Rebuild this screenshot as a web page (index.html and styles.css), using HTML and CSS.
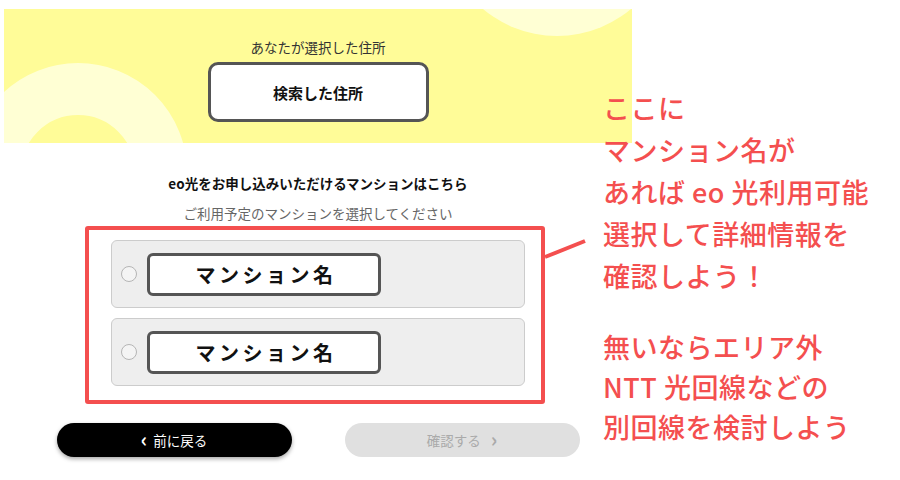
FILE: index.html
```html
<!DOCTYPE html>
<html lang="ja">
<head>
  <meta charset="UTF-8" />
  <meta name="viewport" content="width=device-width, initial-scale=1.0" />
  <title>マンション選択</title>
  <link rel="stylesheet" href="styles.css">
</head>
<body>
  <div class="page">
    <main class="flow">
      <section class="hero">
        <p class="heroLabel">あなたが選択した住所</p>
        <div class="addressBox">検索した住所</div>
      </section>

      <h2 class="lead">eo光をお申し込みいただけるマンションはこちら</h2>
      <p class="hint">ご利用予定のマンションを選択してください</p>

      <div class="pickFrame">
        <label class="option">
          <span class="radio"></span>
          <span class="nameBox">マンション名</span>
        </label>
        <label class="option">
          <span class="radio"></span>
          <span class="nameBox">マンション名</span>
        </label>
      </div>

      <div class="actions">
        <button class="btn btnBack"><span class="chev">‹</span>前に戻る</button>
        <button class="btn btnNext" disabled>確認する<span class="chev">›</span></button>
      </div>
    </main>

    <aside class="note">
      <p class="noteTop">ここに<br>マンション名が<br>あれば eo 光利用可能<br>選択して詳細情報を<br>確認しよう！</p>
      <p class="noteBottom">無いならエリア外<br>NTT 光回線などの<br>別回線を検討しよう</p>
    </aside>

    <!-- pointer from the frame to the note -->
    <svg class="pointer" width="50" height="24" viewBox="0 0 50 24">
      <line x1="2" y1="20" x2="42" y2="4" stroke="#f44f4f" stroke-width="4" />
    </svg>
  </div>
</body>
</html>
```

FILE: styles.css
```css
body {
  margin: 0;
  background: #fff;
  font-family: "Noto Sans CJK JP", "Noto Sans", sans-serif;
  color: #222;
}
.page {
  position: relative;
  width: 900px;
  height: 480px;
  overflow: hidden;
  display: flex;
}
.flow {
  width: 628px;
  margin-left: 4px;
  padding-top: 9px;
  display: flex;
  flex-direction: column;
  align-items: center;
}
.hero {
  position: relative;
  overflow: hidden;
  width: 100%;
  height: 134px;
  box-sizing: border-box;
  padding-top: 29px;
  background: #fffc98;
  display: flex;
  flex-direction: column;
  align-items: center;
}
.hero::before {
  content: "";
  position: absolute;
  left: -35px;
  top: 54px;
  width: 218px;
  height: 218px;
  box-sizing: border-box;
  border: 52px solid #ffffd4;
  border-radius: 50%;
}
.hero::after {
  content: "";
  position: absolute;
  left: 438px;
  top: -203px;
  width: 230px;
  height: 230px;
  border-radius: 50%;
  background: #ffffd4;
}
.heroLabel {
  position: relative;
  z-index: 1;
  margin: 0;
  font-size: 13.5px;
  line-height: 18px;
  color: #333;
}
.addressBox {
  position: relative;
  z-index: 1;
  margin-top: 6px;
  width: 221px;
  height: 60px;
  box-sizing: border-box;
  border: 3px solid #555;
  border-radius: 10px;
  background: #fff;
  display: flex;
  align-items: center;
  justify-content: center;
  font-size: 15px;
  font-weight: bold;
  color: #111;
}
.lead {
  margin: 31px 0 0;
  font-size: 13.5px;
  line-height: 18px;
  font-weight: bold;
  color: #111;
}
.hint {
  margin: 12px 0 0;
  font-size: 13.5px;
  line-height: 18px;
  color: #666;
}
.pickFrame {
  margin: 4px 0 0 -6px;
  width: 460px;
  box-sizing: border-box;
  border: 4px solid #f44f4f;
  border-radius: 3px;
  padding: 10px 16px 14px 22px;
  display: flex;
  flex-direction: column;
  gap: 10px;
}
.option {
  height: 68px;
  box-sizing: border-box;
  background: #eee;
  border: 1px solid #ccc;
  border-radius: 6px;
  padding-left: 9px;
  display: flex;
  align-items: center;
  gap: 10px;
}
.radio {
  width: 16px;
  height: 16px;
  box-sizing: border-box;
  border: 1.5px solid #b5b5b5;
  border-radius: 50%;
  background: #f4f4f4;
}
.nameBox {
  width: 234px;
  height: 43px;
  box-sizing: border-box;
  border: 3px solid #555;
  border-radius: 6px;
  background: #fff;
  display: flex;
  align-items: center;
  justify-content: center;
  padding-left: 4px;
  font-size: 20px;
  font-weight: bold;
  letter-spacing: 3.5px;
  color: #111;
}
.actions {
  margin-top: 19px;
  display: flex;
  gap: 53px;
}
.btn {
  width: 235px;
  height: 34px;
  border: none;
  border-radius: 17px;
  font-family: inherit;
  font-size: 13.5px;
  display: flex;
  align-items: center;
  justify-content: center;
  gap: 6px;
}
.btnBack {
  background: #000;
  color: #fff;
  box-shadow: 0 2px 4px rgba(0,0,0,0.35);
}
.btnNext {
  background: #e0e0e0;
  color: #aaa;
  gap: 10px;
}
.chev {
  font-size: 20px;
  line-height: 1;
  font-weight: bold;
  margin-top: -3px;
}
.note {
  position: relative;
  margin-left: -29px;
  padding-top: 87px;
  color: #f44f4f;
  font-size: 27px;
  font-weight: 500;
  letter-spacing: 0.5px;
  white-space: nowrap;
}
.noteTop {
  margin: 0;
  line-height: 42px;
}
.noteBottom {
  margin: 30px 0 0;
  line-height: 40px;
}
.pointer {
  position: absolute;
  left: 543px;
  top: 237px;
}
```
